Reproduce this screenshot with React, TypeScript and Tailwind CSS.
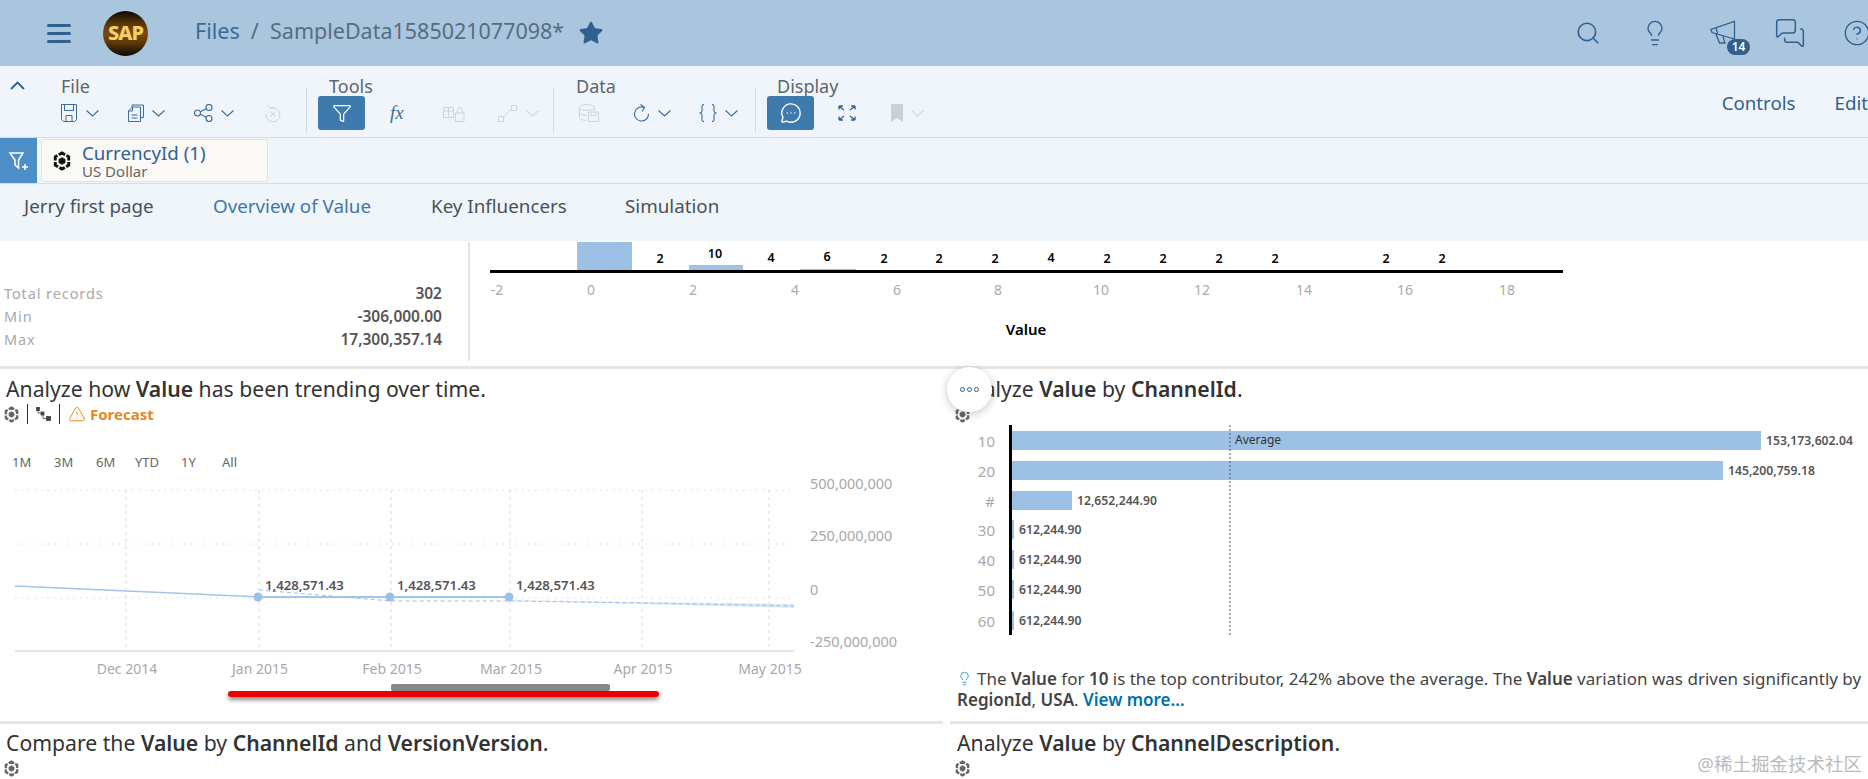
import {
  CircleHelp,
  Funnel,
  Lightbulb,
  MessageCircleMore,
  MessagesSquare,
  Search,
  Star,
  TriangleAlert,
} from "lucide-react";

const FONT = "font-['Noto_Sans','Open_Sans',sans-serif]";

const CubeIcon = ({ className = "h-4 w-4 text-[#555]" }: { className?: string }) => (
  <svg viewBox="0 0 20 22" className={className} fill="none" stroke="currentColor">
    <path d="M10 2 17.500 6.300v9.400L10 20 2.500 15.700V6.300Z" strokeWidth="3.200" strokeDasharray="7 1.700" strokeDashoffset="3" />
    <path d="M10 7 13.500 9v4L10 15l-3.500-2V9Z" fill="currentColor" strokeWidth="0.500" />
  </svg>
);

const Drop = ({ off = false, ml }: { off?: boolean; ml: string }) => (
  <svg
    viewBox="0 0 13 7"
    className={`h-[7px] w-[13px] ${ml} ${off ? "text-[#d0d7de]" : "text-[#3d6c96]"}`}
    fill="none"
    stroke="currentColor"
    strokeWidth="1.100"
  >
    <path d="M0.500 0.500 6.500 6 12.500 0.500" />
  </svg>
);

const ToolLabel = ({ text, pad }: { text: string; pad: string }) => (
  <div className={`h-[20px] text-[18px] leading-[20px] text-[#5e666d] ${pad}`}>{text}</div>
);

const Divider = () => <div className="mt-[12px] h-[45px] w-px bg-[#d3dae0]" />;

const PageTab = ({ text, active, w }: { text: string; active?: boolean; w: string }) => (
  <div className={`${w} text-[18.800px] ${active ? "text-[#3f77a8]" : "text-[#48525a]"}`}>{text}</div>
);

const Stat = ({ label, value }: { label: string; value: string }) => (
  <div className="flex h-[23px] items-center justify-between">
    <span className="text-[14.500px] tracking-[0.9px] text-[#a9a9a9]">{label}</span>
    <span className="text-[15.500px] font-semibold text-[#555]">{value}</span>
  </div>
);

const Heading = ({ children, pad }: { children: React.ReactNode; pad: string }) => (
  <h2 className={`flex h-[36px] items-center text-[21.200px] font-normal whitespace-pre text-[#333] ${pad}`}>{children}</h2>
);

const histCounts = [
  { x: 660, y: 263, t: "2" },
  { x: 715, y: 258, t: "10" },
  { x: 771, y: 262, t: "4" },
  { x: 827, y: 261, t: "6" },
  { x: 884, y: 263, t: "2" },
  { x: 939, y: 263, t: "2" },
  { x: 995, y: 263, t: "2" },
  { x: 1051, y: 262, t: "4" },
  { x: 1107, y: 263, t: "2" },
  { x: 1163, y: 263, t: "2" },
  { x: 1219, y: 263, t: "2" },
  { x: 1275, y: 263, t: "2" },
  { x: 1386, y: 263, t: "2" },
  { x: 1442, y: 263, t: "2" },
];

const histAxis = [
  { x: 497, t: "-2" },
  { x: 591, t: "0" },
  { x: 693, t: "2" },
  { x: 795, t: "4" },
  { x: 897, t: "6" },
  { x: 998, t: "8" },
  { x: 1101, t: "10" },
  { x: 1202, t: "12" },
  { x: 1304, t: "14" },
  { x: 1405, t: "16" },
  { x: 1507, t: "18" },
];

const Histogram = () => (
  <svg width="1398" height="126" viewBox="470 241 1398 126" className="block">
    <rect x="577" y="242" width="55" height="28" fill="#9dc1e5" />
    <rect x="689" y="265" width="54" height="5" fill="#9dc1e5" />
    <rect x="800" y="269" width="56" height="1" fill="#9dc1e5" />
    <rect x="490" y="270" width="1073" height="3" fill="#000" />
    {histCounts.map((c) => (
      <text key={c.x} x={c.x} y={c.y} textAnchor="middle" fontSize="12.500" fontWeight="600" fill="#000">
        {c.t}
      </text>
    ))}
    {histAxis.map((a) => (
      <text key={a.x} x={a.x} y={295} textAnchor="middle" fontSize="14" fill="#aaa">
        {a.t}
      </text>
    ))}
    <text x="1026" y="335" textAnchor="middle" fontSize="15" fontWeight="600" fill="#000">
      Value
    </text>
  </svg>
);

const gridX = [126, 259, 391, 510, 642, 769];
const trendLabels = ["Dec 2014", "Jan 2015", "Feb 2015", "Mar 2015", "Apr 2015", "May 2015"];
const trendY = [
  { y: 489, t: "500,000,000" },
  { y: 541, t: "250,000,000" },
  { y: 595, t: "0" },
  { y: 647, t: "-250,000,000" },
];

const TrendChart = () => (
  <svg width="943" height="248" viewBox="0 473 943 248" className="block">
    <defs>
      <filter id="redShadow" x="-5%" y="-200%" width="110%" height="500%">
        <feDropShadow dx="0" dy="3" stdDeviation="2" floodColor="#000" floodOpacity="0.45" />
      </filter>
    </defs>
    {[490, 544, 598].map((y) => (
      <line key={y} x1="15" x2="790" y1={y} y2={y} stroke="#d8d8d8" strokeDasharray="1.500 5" />
    ))}
    {gridX.map((x) => (
      <line key={x} x1={x} x2={x} y1="490" y2="651" stroke="#d8d8d8" strokeDasharray="3 4" />
    ))}
    <line x1="15" x2="794" y1="651" y2="651" stroke="#dcdcdc" strokeWidth="1.500" />
    <path d="M510 600 L642 602 L794 604 V608 L642 604 L510 601 Z" fill="#dce9f6" />
    <polyline points="15,586 259,597 391,597 510,597" fill="none" stroke="#a4c5e6" strokeWidth="1.500" />
    <line x1="259" x2="510" y1="597" y2="597" stroke="#a4c5e6" strokeWidth="2" />
    <polyline
      points="259,590 391,601 510,601 642,603 794,606"
      fill="none"
      stroke="#9dbfe2"
      strokeWidth="1"
      strokeDasharray="4 3"
    />
    {[258, 390, 509].map((x) => (
      <circle key={x} cx={x} cy="597" r="4.500" fill="#9dc1e5" />
    ))}
    {[265, 397, 516].map((x) => (
      <text key={x} x={x} y="590" fontSize="13.200" fontWeight="600" fill="#555">
        1,428,571.43
      </text>
    ))}
    {trendY.map((l) => (
      <text key={l.t} x="810" y={l.y} fontSize="14.500" fill="#a8a8a8">
        {l.t}
      </text>
    ))}
    {gridX.map((x, i) => (
      <text key={x} x={x + 1} y="674" textAnchor="middle" fontSize="14" fill="#a8a8a8">
        {trendLabels[i]}
      </text>
    ))}
    <rect x="391" y="684" width="219" height="7" rx="2" fill="#888" />
    <rect x="228" y="691" width="431" height="6" rx="3" fill="#ea0000" filter="url(#redShadow)" />
  </svg>
);

const channelRows = [
  { k: "10", cy: 441, end: 1761, v: "153,173,602.04" },
  { k: "20", cy: 471, end: 1723, v: "145,200,759.18" },
  { k: "#", cy: 501, end: 1072, v: "12,652,244.90" },
  { k: "30", cy: 530, end: 1014, v: "612,244.90" },
  { k: "40", cy: 560, end: 1014, v: "612,244.90" },
  { k: "50", cy: 590, end: 1014, v: "612,244.90" },
  { k: "60", cy: 621, end: 1014, v: "612,244.90" },
];

const ChannelChart = () => (
  <svg width="918" height="240" viewBox="950 422 918 240" className="block">
    {channelRows.map((r) => (
      <g key={r.k}>
        <text x="995" y={r.cy + 6} textAnchor="end" fontSize="15" fill="#a8a8a8">
          {r.k}
        </text>
        <rect x="1012" y={r.cy - 10} width={r.end - 1012} height="19" fill="#9dc1e5" />
        <text x={r.end + 5} y={r.cy + 4} fontSize="12.200" fontWeight="600" fill="#555">
          {r.v}
        </text>
      </g>
    ))}
    <rect x="1009" y="425" width="3" height="210" fill="#000" />
    <line x1="1230" x2="1230" y1="425" y2="635" stroke="#555" strokeDasharray="2 2" />
    <text x="1235" y="444" fontSize="12" fill="#333">
      Average
    </text>
  </svg>
);

export default function App() {
  return (
    <div className={`relative h-[779px] w-[1868px] overflow-hidden bg-white ${FONT}`}>
      <header className="flex h-[66px] items-center bg-[#aac6df]">
        <div className="ml-[47px] flex w-[24px] flex-col gap-[5px]">
          <span className="h-[3px] rounded-sm bg-[#2f6190]" />
          <span className="h-[3px] rounded-sm bg-[#2f6190]" />
          <span className="h-[3px] rounded-sm bg-[#2f6190]" />
        </div>
        <div className="ml-[32px] flex h-[45px] w-[45px] items-center justify-center rounded-full bg-[linear-gradient(180deg,#0c0703_0%,#5a3608_28%,#7a4c0c_50%,#5a3608_72%,#0c0703_100%)] text-[20px] font-extrabold tracking-[-1px] text-[#f3d067]">
          SAP
        </div>
        <div className="-mt-[3px] ml-[47px] text-[21.500px] whitespace-pre text-[#3a6a94]">
          Files<span className="text-[#4f6b82]">{"  /  "}</span>
          <span className="text-[#566d80]">SampleData1585021077098*</span>
        </div>
        <Star className="ml-[14px] h-[26px] w-[26px] fill-[#2f6190] text-[#2f6190]" strokeWidth={1} />
        <div className="-mr-[3px] ml-auto flex items-center text-[#2f6190]">
          <Search className="h-[26px] w-[26px]" strokeWidth={1.5} />
          <Lightbulb className="ml-[40px] h-[28px] w-[28px]" strokeWidth={1.2} />
          <div className="relative ml-[40px] h-[26px] w-[27px]">
            <svg viewBox="0 0 27 26" className="h-[26px] w-[27px]" fill="none" stroke="currentColor" strokeWidth="1.300">
              <path d="M25.500 1.500V19L3 12.500 2 9.500ZM7 14l3.500 9h5.500l-2-6.500M7 7.500l1.500 6" />
            </svg>
            <span className="absolute top-[19px] left-[18px] flex h-[16px] w-[23px] items-center justify-center rounded-full bg-[#2f5f8a] text-[12px] font-semibold text-white">
              14
            </span>
          </div>
          <MessagesSquare className="ml-[38px] h-[32px] w-[32px]" strokeWidth={1.1} />
          <CircleHelp className="ml-[37px] h-[28px] w-[28px]" strokeWidth={1.2} />
        </div>
      </header>

      <section className="flex h-[72px] border-b border-[#d5dce3] bg-[#eff5fa] pt-[10px]">
        <div className="w-[61px] pt-[5px] pl-[10px]">
          <svg viewBox="0 0 15 9" className="h-[9px] w-[15px] text-[#2f6190]" fill="none" stroke="currentColor" strokeWidth="1.800">
            <path d="M1 8 7.500 1.500 14 8" />
          </svg>
        </div>

        <div className="w-[245px]">
          <ToolLabel text="File" pad="" />
          <div className="flex h-[34px] items-center text-[#3d6c96]">
            <svg viewBox="0 0 16 18" className="h-[18px] w-[16px]" fill="none" stroke="currentColor">
              <path d="M0.500 0.500h15v15l-2 2h-11l-2-2ZM3.500 0.500v6h9v-6M5 17.500v-6h6v6" />
            </svg>
            <Drop ml="ml-[9px]" />
            <svg viewBox="0 0 16 18" className="ml-[29px] h-[18px] w-[16px]" fill="none" stroke="currentColor">
              <path d="M4 3V1h9l2.500 0v12.500H13M4.500 3h8v14.500h-12V7ZM4.500 3v4H0.500M3.500 11h6M3.500 14h6" />
            </svg>
            <Drop ml="ml-[8px]" />
            <svg viewBox="0 0 19 18" className="ml-[29px] h-[18px] w-[19px]" fill="none" stroke="currentColor" strokeWidth="1.100">
              <circle cx="3.500" cy="9" r="3" />
              <circle cx="15" cy="3.500" r="3" />
              <circle cx="15" cy="14.500" r="3" />
              <path d="M6.300 7.700 12.300 4.800M6.300 10.300 12.300 13.200" />
            </svg>
            <Drop ml="ml-[8px]" />
            <svg viewBox="0 0 16 18" className="ml-[31px] h-[18px] w-[16px] text-[#ccd3da]" fill="none" stroke="currentColor">
              <path d="M3 1l2.500 3.500L9 3.500M5 4.500A7 7 0 1 1 1 10M5.500 7.500l5 5M10.500 7.500l-5 5" />
            </svg>
          </div>
        </div>
        <Divider />

        <div className="w-[246px] pl-[11px]">
          <ToolLabel text="Tools" pad="pl-[11px]" />
          <div className="flex h-[34px] items-center">
            <div className="flex h-[34px] w-[47px] items-center justify-center rounded-[3px] bg-[#3f7aad]">
              <Funnel className="h-[20px] w-[20px] text-white" strokeWidth={1.5} />
            </div>
            <span className="ml-[25px] w-[17px] font-['Liberation_Serif',serif] text-[19px] text-[#3d6c96] italic">fx</span>
            <svg viewBox="0 0 22 17" className="ml-[36px] h-[17px] w-[22px] text-[#ccd3da]" fill="none" stroke="currentColor">
              <path d="M0.500 2.500h10v10h-10ZM0.500 6h10M5.500 2.500v10" />
              <path d="M12.500 8h8.500v8.500h-8.500ZM14.500 8V4.500a2.300 2.300 0 0 1 4.500 0V8" />
            </svg>
            <svg viewBox="0 0 19 17" className="ml-[33px] h-[17px] w-[19px] text-[#ccd3da]" fill="none" stroke="currentColor">
              <path d="M0.500 11.500h5v5h-5ZM13.500 0.500h5v5h-5ZM5.500 12c3-1 3-5 8-7.500" />
            </svg>
            <Drop off ml="ml-[9px]" />
          </div>
        </div>
        <Divider />

        <div className="w-[201px]">
          <ToolLabel text="Data" pad="pl-[22px]" />
          <div className="flex h-[34px] items-center">
            <svg viewBox="0 0 20 18" className="ml-[25px] h-[18px] w-[20px] text-[#ccd3da]" fill="none" stroke="currentColor">
              <ellipse cx="8" cy="3.500" rx="7.500" ry="3" />
              <path d="M0.500 3.500v10c0 1.500 3 3 7 3M0.500 8.500c0 1.500 3 3 7 3M15.500 3.500v3.500M9.500 8h10v9.500h-10ZM12 8v3.500h5V8" />
            </svg>
            <svg viewBox="0 0 16 18" className="ml-[34px] h-[18px] w-[16px] text-[#3d6c96]" fill="none" stroke="currentColor" strokeWidth="1.100">
              <path d="M11 3.500A7 7 0 1 0 15.500 10M7.500 0.500 11.500 3.500 9 7.500" />
            </svg>
            <Drop ml="ml-[9px]" />
            <svg viewBox="0 0 18 18" className="ml-[28px] h-[18px] w-[18px] text-[#3d6c96]" fill="none" stroke="currentColor" strokeWidth="1.100">
              <path d="M5 0.500C2.500 0.500 3 3 3 5.500S3 8.500 0.500 9C3 9.500 3 10 3 12.500s-0.500 5 2 5M13 0.500c2.500 0 2 2.500 2 5s0 3 2.500 3.500C15 9.500 15 10 15 12.500s0.500 5-2 5" />
            </svg>
            <Drop ml="ml-[8px]" />
          </div>
        </div>
        <Divider />

        <div className="pl-[11px]">
          <ToolLabel text="Display" pad="pl-[10px]" />
          <div className="flex h-[34px] items-center">
            <div className="flex h-[34px] w-[47px] items-center justify-center rounded-[3px] bg-[#3f7aad]">
              <MessageCircleMore className="h-[22px] w-[22px] text-white" strokeWidth={1.5} />
            </div>
            <svg viewBox="0 0 18 16" className="ml-[24px] h-[16px] w-[18px] text-[#2f6190]" fill="none" stroke="currentColor" strokeWidth="1.300">
              <path d="M1 1l5 4M1 1v3.500M1 1h4M17 1l-5 4M17 1v3.500M17 1h-4M1 15l5-4M1 15v-3.500M1 15h4M17 15l-5-4M17 15v-3.500M17 15h-4" />
            </svg>
            <svg viewBox="0 0 12 18" className="ml-[35px] h-[18px] w-[12px]" fill="#c9d1d8">
              <path d="M0 0h12v18l-6-4-6 4Z" />
            </svg>
            <Drop off ml="ml-[8px]" />
          </div>
        </div>

        <div className="ml-auto flex h-[54px] items-center gap-[39px] text-[18.700px] whitespace-nowrap text-[#2f6190]">
          <span>Controls</span>
          <span>Edit</span>
        </div>
      </section>

      <section className="flex h-[46px] border-b border-[#d5dce3] bg-[#eff5fa]">
        <div className="flex w-[37px] items-center justify-center bg-[#4b8fc6]">
          <svg viewBox="0 0 22 22" className="h-[22px] w-[22px]" fill="none" stroke="#fff" strokeWidth="1.500">
            <path d="M2 3h13L10.500 10v8L7 15v-5ZM14 17h6M17 14v6" />
          </svg>
        </div>
        <div className="mt-px ml-[4px] flex h-[43px] w-[227px] items-center rounded-[3px] border border-[#dfe3e6] bg-[#faf9f6] pl-[11px]">
          <CubeIcon className="h-[20px] w-[18px] text-[#111]" />
          <div className="ml-[11px]">
            <div className="text-[18.700px] leading-[22px] text-[#2f6190]">CurrencyId (1)</div>
            <div className="text-[15px] leading-[15px] text-[#666]">US Dollar</div>
          </div>
        </div>
      </section>

      <nav className="flex h-[57px] items-start bg-[#f0f5fa] pt-[8px] pl-[24px] leading-[28px]">
        <PageTab text="Jerry first page" w="w-[189px]" />
        <PageTab text="Overview of Value" active w="w-[218px]" />
        <PageTab text="Key Influencers" w="w-[194px]" />
        <PageTab text="Simulation" w="w-[120px]" />
      </nav>

      <section className="flex h-[128px] border-b-[3px] border-[#e6e6e6]">
        <div className="w-[442px] pt-[41px] pl-[4px]">
          <Stat label="Total records" value="302" />
          <Stat label="Min" value="-306,000.00" />
          <Stat label="Max" value="17,300,357.14" />
        </div>
        <div className="mt-px ml-[26px] h-[119px] w-[2px] bg-[#e6e6e6]" />
        <Histogram />
      </section>

      <main className="flex gap-[7px]">
        <div className="w-[943px]">
          <article className="h-[355px] border-b-[3px] border-[#e6e6e6] pt-[2px]">
            <Heading pad="pl-[6px]">
              Analyze how <b className="font-semibold">Value</b> has been trending over time.
            </Heading>
            <div className="flex h-[14px] items-center pl-[4px]">
              <CubeIcon className="h-[17px] w-[15px] text-[#666]" />
              <span className="ml-[8px] h-[20px] w-px bg-[#333]" />
              <svg viewBox="0 0 15 15" className="ml-[8px] h-[15px] w-[15px]" fill="#444" stroke="#444" strokeWidth="0.800">
                <rect x="0.500" y="0.500" width="3" height="3" />
                <rect x="5" y="5" width="3" height="3" />
                <rect x="10.500" y="9.500" width="4" height="4" />
                <path d="M2 3v3h4M7 8v3.500h4" fill="none" />
              </svg>
              <span className="ml-[8px] h-[20px] w-px bg-[#333]" />
              <TriangleAlert className="ml-[8px] h-[18px] w-[18px] text-[#e08a1e]" strokeWidth={1.3} />
              <span className="ml-[4px] text-[15px] font-bold text-[#e08a1e]">Forecast</span>
            </div>
            <div className="mt-[32px] flex h-[20px] items-center pl-[12px] text-[13px] text-[#666]">
              <span className="w-[42px]">1M</span>
              <span className="w-[42px]">3M</span>
              <span className="w-[39px]">6M</span>
              <span className="w-[46px]">YTD</span>
              <span className="w-[41px]">1Y</span>
              <span>All</span>
            </div>
            <TrendChart />
          </article>
          <article className="pt-px">
            <Heading pad="pl-[6px]">
              Compare the <b className="font-semibold">Value</b> by <b className="font-semibold">ChannelId</b> and{" "}
              <b className="font-semibold">VersionVersion</b>.
            </Heading>
            <div className="flex h-[14px] items-center pl-[4px]">
              <CubeIcon className="h-[17px] w-[15px] text-[#666]" />
            </div>
          </article>
        </div>

        <div className="flex-1">
          <article className="h-[355px] border-b-[3px] border-[#e6e6e6] pt-[2px]">
            <Heading pad="pl-[7px]">
              Analyze <b className="font-semibold">Value</b> by <b className="font-semibold">ChannelId</b>.
            </Heading>
            <div className="flex h-[15px] items-center pl-[5px]">
              <CubeIcon className="h-[17px] w-[15px] text-[#666]" />
            </div>
            <ChannelChart />
            <p className="mt-[6px] pl-[7px] text-[17px] leading-[21px] text-[#444]">
              <Lightbulb className="mr-[5px] inline h-[19px] w-[15px] align-[-3px] text-[#2b8fc4]" strokeWidth={1.4} />
              The <b className="font-semibold">Value</b> for <b className="font-semibold">10</b> is the top contributor,
              242% above the average. The <b className="font-semibold">Value</b> variation was driven significantly by{" "}
              <b className="font-semibold">RegionId</b>, <b className="font-semibold">USA</b>.{" "}
              <a className="font-semibold text-[#0070a8]">View more...</a>
            </p>
          </article>
          <article className="pt-px">
            <Heading pad="pl-[7px]">
              Analyze <b className="font-semibold">Value</b> by <b className="font-semibold">ChannelDescription</b>.
            </Heading>
            <div className="flex h-[14px] items-center pl-[5px]">
              <CubeIcon className="h-[17px] w-[15px] text-[#666]" />
            </div>
          </article>
        </div>
      </main>

      <button className="absolute top-[367px] left-[947px] flex h-[45px] w-[45px] items-center justify-center rounded-full bg-white shadow-[0_2px_10px_rgba(0,0,0,0.22)]">
        <span className="flex gap-[2px]">
          <span className="h-[5px] w-[5px] rounded-full border border-[#2f6190]" />
          <span className="h-[5px] w-[5px] rounded-full border border-[#2f6190]" />
          <span className="h-[5px] w-[5px] rounded-full border border-[#2f6190]" />
        </span>
      </button>

      <span className="absolute top-[750px] right-[6px] font-['Noto_Sans','Noto_Sans_CJK_SC',sans-serif] text-[18.500px] text-[#bbb]">
        @稀土掘金技术社区
      </span>
    </div>
  );
}
